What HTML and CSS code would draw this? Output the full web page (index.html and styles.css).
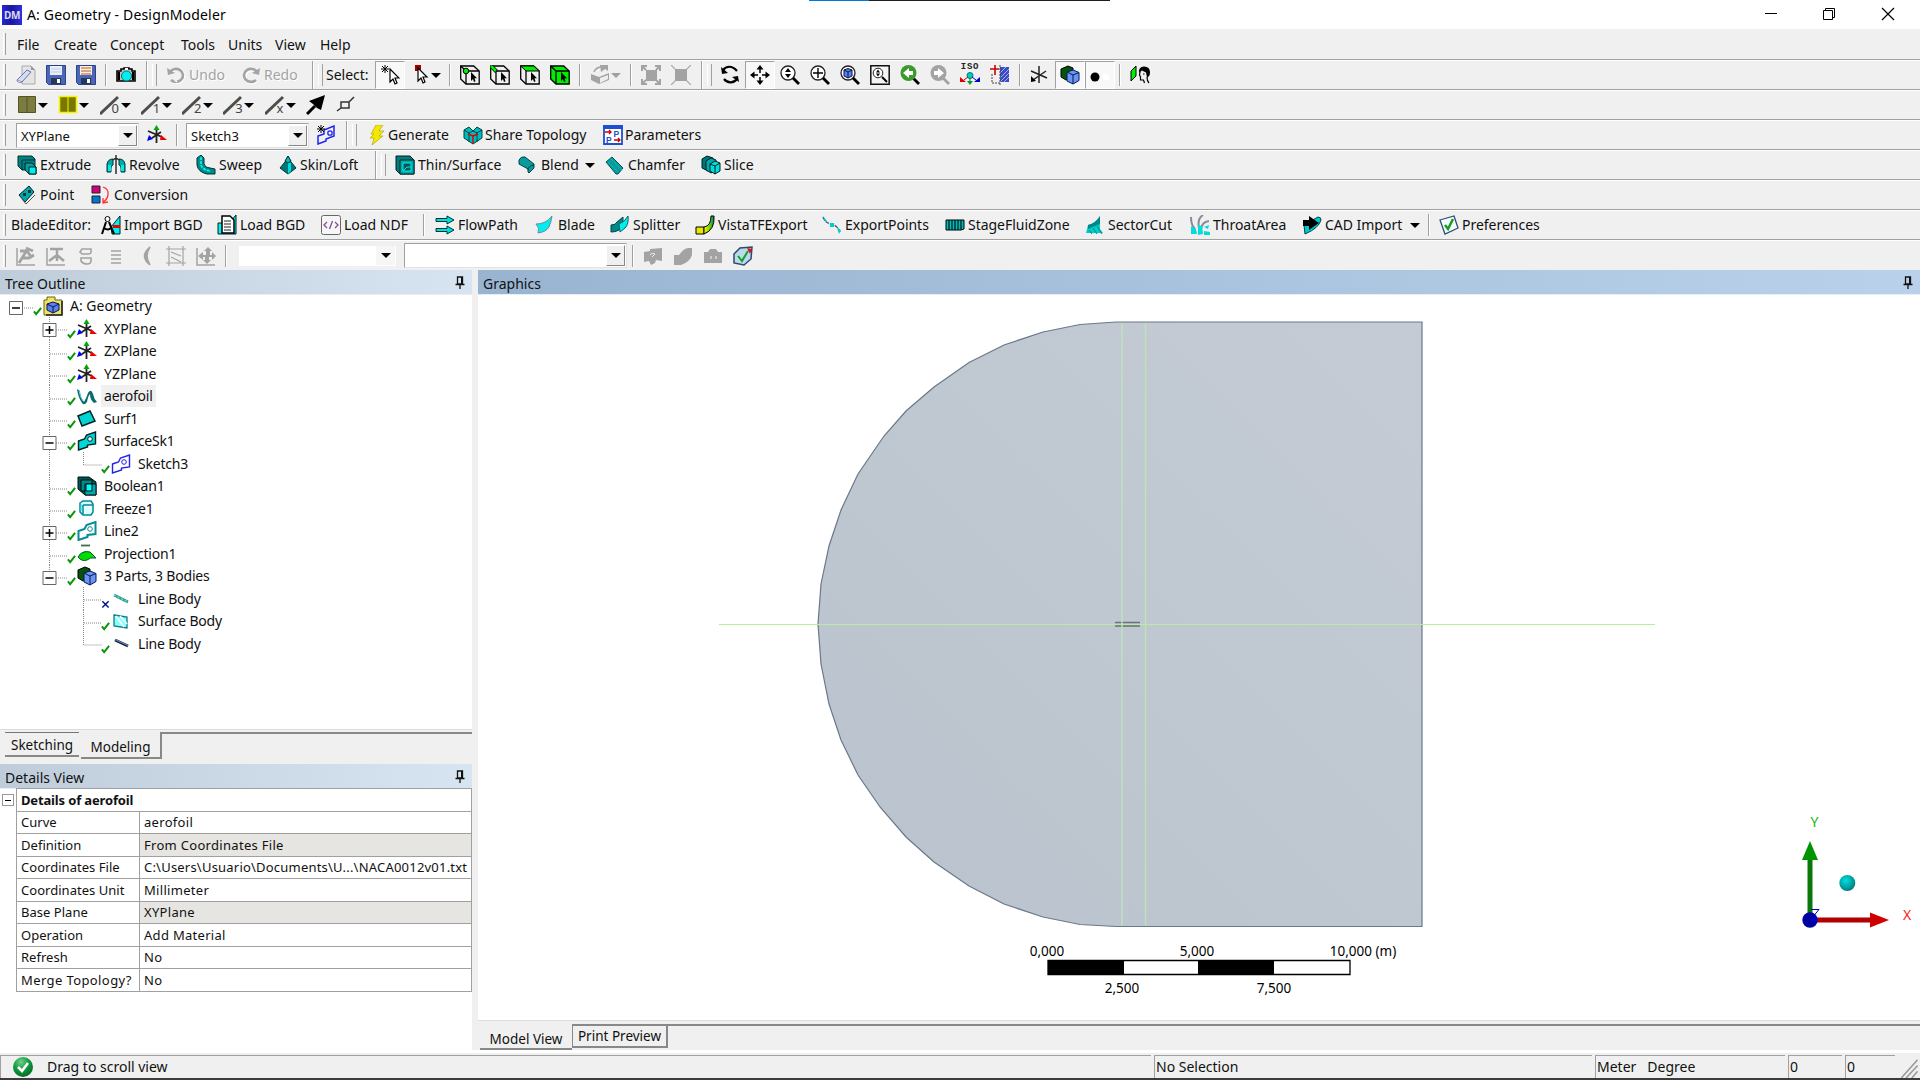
FILE: index.html
```html
<!DOCTYPE html>
<html lang="en">
<head>
<meta charset="utf-8">
<title>A: Geometry - DesignModeler</title>
<link rel="stylesheet" href="styles.css">
</head>
<body>
<svg class="defs" aria-hidden="true">
<defs>
<linearGradient id="face" x1="0" y1="1" x2="1" y2="0"><stop offset="0" stop-color="#bac3cd"/><stop offset="1" stop-color="#c4cbd5"/></linearGradient>
<radialGradient id="ballc" cx=".4" cy=".35" r=".7"><stop offset="0" stop-color="#00e0e0"/><stop offset="1" stop-color="#007878"/></radialGradient>
<radialGradient id="ballg" cx=".4" cy=".25" r=".8"><stop offset="0" stop-color="#6fd08c"/><stop offset=".5" stop-color="#109a3c"/><stop offset="1" stop-color="#04662a"/></radialGradient>
<linearGradient id="fan" x1="0" x2="1"><stop offset="0" stop-color="#ff0"/><stop offset=".6" stop-color="#6c0"/><stop offset="1" stop-color="#088"/></linearGradient>
</defs>
<symbol id="new" viewBox="0 0 20 20"><path d="M6 1h9l4 4v14H6z" fill="#e4e4e4" stroke="#aaa"/><path d="M15 1v4h4" fill="#999"/><path d="M1 15L11 5l4 2-9 10z" fill="#d6dcf4" stroke="#6a74a8"/><path d="M1 15q0 3 5 2" stroke="#6a74a8" fill="#fff"/></symbol>
<symbol id="save" viewBox="0 0 20 20"><path d="M.5.5h19v19h-17l-2-2z" fill="#4a66b4" stroke="#2c438c"/><path d="M4 1h12v9H4z" fill="#e9eefa"/><path d="M5 4h10M5 7h10" stroke="#c3cbe0"/><path d="M5 13h10v6H5z" fill="#24365e"/><path d="M11 14h3v4h-3z" fill="#fff"/></symbol>
<symbol id="saveas" viewBox="0 0 20 20"><path d="M.5.5h19v19h-17l-2-2z" fill="#4a66b4" stroke="#2c438c"/><path d="M4 1h12v9H4z" fill="#fff0d8"/><path d="M5 3h10M5 6h10M5 9h10" stroke="#b0573c"/><path d="M5 13h10v6H5z" fill="#24365e"/><path d="M11 14h3v4h-3z" fill="#fff"/></symbol>
<symbol id="camera" viewBox="0 0 20 20"><path d="M1 6h4V4h3V3h5v1h3v2h3v10H1z" fill="#c0c0c0" stroke="#000" stroke-width="1.6"/><path d="M3 7v8M17 7v8" stroke="#000" stroke-width="2"/><circle cx="10.500" cy="11" r="5" fill="#0ee" stroke="#077"/><path d="M9 3h3v2H9z" fill="#fff"/></symbol>
<symbol id="undo" viewBox="0 0 20 20"><path d="M3 8a7 7 0 1 1 2 7" fill="none" stroke="#fff" stroke-width="3" transform="translate(1 1)"/><path d="M4 7a7 6.500 0 1 1 1 8" fill="none" stroke="#a3a3a3" stroke-width="2.600"/><path d="M1 3l1 7 7-2z" fill="#a3a3a3"/><path d="M9 15l2 2" stroke="#f0f0f0" stroke-width="2"/></symbol>
<symbol id="redo" viewBox="0 0 20 20"><path d="M16 7A7 6.500 0 1 0 15 15" fill="none" stroke="#fff" stroke-width="2.600" transform="translate(1 1)"/><path d="M16 7A7 6.500 0 1 0 15 15" fill="none" stroke="#a3a3a3" stroke-width="2.600"/><path d="M19 3l-1 7-7-2z" fill="#a3a3a3"/></symbol>
<symbol id="cur" viewBox="0 0 20 20"><path d="M10 4v13l3-3 2 5 2-1-2-5h4z" fill="#fff" stroke="#000" stroke-width="1.200"/><path d="M5 0v8M1 4h8M2 1l6 6M8 1L2 7" stroke="#000"/></symbol>
<symbol id="pick" viewBox="0 0 20 20"><path d="M5 0h6v6H5z" fill="#a00000"/><path d="M8 3v13l3-3 2 5 2-1-2-5h4z" fill="#fff" stroke="#000" stroke-width="1.200"/></symbol>
<symbol id="cubep" viewBox="0 0 20 20"><path d="M.7 1h13l5.500 5v13H6l-5.300-5z" fill="#f0f0f0" stroke="#000" stroke-width="1.300"/><path d="M.7 1L6 6h13M6 6v13" fill="none" stroke="#000" stroke-width="1.300"/><circle cx="6" cy="6" r="2.800" fill="#0e0" stroke="#000"/><path d="M11 7v9l2-2 1 3 1.500-.7-1-3H17z"/></symbol>
<symbol id="cubee" viewBox="0 0 20 20"><path d="M.7 1h13l5.500 5v13H6l-5.300-5z" fill="#f0f0f0" stroke="#000" stroke-width="1.300"/><path d="M6 6h13M6 6v13" fill="none" stroke="#000" stroke-width="1.300"/><path d="M1 1l5.500 5.500" stroke="#000" stroke-width="4"/><path d="M1 1l5 5" stroke="#0e0" stroke-width="2.600"/><path d="M11 7v9l2-2 1 3 1.500-.7-1-3H17z"/></symbol>
<symbol id="cubef" viewBox="0 0 20 20"><path d="M.7 1h13l5.500 5v13H6l-5.300-5z" fill="#f0f0f0" stroke="#000" stroke-width="1.300"/><path d="M.7 1h13l5.500 5H6z" fill="#0e0" stroke="#000"/><path d="M6 6v13" stroke="#000" stroke-width="1.300"/><path d="M11 7v9l2-2 1 3 1.500-.7-1-3H17z"/></symbol>
<symbol id="cubeb" viewBox="0 0 20 20"><path d="M.7 1h13l5.500 5v13H6l-5.300-5z" fill="#0e0" stroke="#000" stroke-width="1.300"/><path d="M.7 1L6 6h13M6 6v13" fill="none" stroke="#000" stroke-width="1.300"/><path d="M11 7v9l2-2 1 3 1.500-.7-1-3H17z"/></symbol>
<symbol id="ext" viewBox="0 0 20 20"><path d="M1 9l8 3v7l-8-4zM9 12l10-4v7L9 19z" fill="#a3a3a3"/><path d="M10 13l8-3v4l-8 4z" fill="#eee"/><path d="M4 7q2-5 8-5" fill="none" stroke="#a3a3a3" stroke-width="1.500"/><path d="M10 0h8v6l-3-2-4 3z" fill="#a3a3a3"/></symbol>
<symbol id="gr1" viewBox="0 0 20 20"><path d="M5 5h11v11H5z" fill="#a3a3a3"/><path d="M1 6V1h5M14 1h5v5M19 14v5h-5M6 19H1v-5M1 1l4 4M19 1l-4 4M1 19l4-4M19 19l-4-4" fill="none" stroke="#a3a3a3" stroke-width="2"/></symbol>
<symbol id="gr2" viewBox="0 0 20 20"><path d="M4 4h12v12H4z" fill="#a3a3a3"/><path d="M0 0l20 20M20 0L0 20" stroke="#a3a3a3" stroke-width="1.200"/></symbol>
<symbol id="rot" viewBox="0 0 20 20"><path d="M3 5c3-4 9-5 14 1M17 14c-3 4-9 5-13 0" fill="none" stroke="#000" stroke-width="2.200"/><path d="M1 2l1 7 6-1zM19 17l-1-6-6 1z"/></symbol>
<symbol id="pan" viewBox="0 0 20 20"><path d="M10 4v4M10 12v4M4 10h4M12 10h4" stroke="#000" stroke-width="1.500"/><path d="M10 0l3.500 4.500h-7zM10 20l3.500-4.500h-7zM0 10l4.500-3.500v7zM20 10l-4.500-3.500v7z"/></symbol>
<symbol id="mag" viewBox="0 0 20 20"><circle cx="8" cy="8" r="7" fill="#fff" stroke="#222" stroke-width="1.300"/><path d="M13 13l6 6" stroke="#000" stroke-width="2.800"/></symbol>
<symbol id="z1" viewBox="0 0 20 20"><use href="#mag"/><path d="M8 3l3 4H5zM8 13l3-4H5z"/></symbol>
<symbol id="z2" viewBox="0 0 20 20"><use href="#mag"/><path d="M8 3v10M3 8h10" stroke="#000" stroke-width="1.400"/></symbol>
<symbol id="z3" viewBox="0 0 20 20"><use href="#mag"/><path d="M4 5l4-1.500L12 5v6l-4 2-4-2z" fill="#5584f0" stroke="#114" /><path d="M4 5l4 2 4-2M8 7v6" stroke="#114" fill="none"/></symbol>
<symbol id="z4" viewBox="0 0 20 20"><path d="M.8.800h18.400v18.400H.8z" fill="#f4f4f4" stroke="#111" stroke-width="1.500"/><circle cx="8" cy="8" r="4.800" fill="#fff" stroke="#222"/><path d="M12 12l5 5" stroke="#000" stroke-width="2"/><path d="M8 4.500l2 3H6zM8 11.500l2-3H6z"/></symbol>
<symbol id="z5" viewBox="0 0 20 20"><path d="M13 13l6 6" stroke="#000" stroke-width="2.800"/><circle cx="8.500" cy="8" r="8" fill="#3c9a2c"/><path d="M3 8l6-5v3h4v4H9v3z" fill="#fff"/></symbol>
<symbol id="z6" viewBox="0 0 20 20"><path d="M13 13l6 6" stroke="#a3a3a3" stroke-width="2.800"/><circle cx="8.500" cy="8" r="8" fill="#a3a3a3"/><path d="M14 8L8 3v3H4v4h4v3z" fill="#fff"/></symbol>
<symbol id="iso" viewBox="0 0 20 20"><circle cx="10" cy="10.500" r="3" fill="#0cc" stroke="#077"/><path d="M10 13v4" stroke="#080"/><path d="M7 16h6l-3 4z" fill="#093"/><path d="M8 12l-4 3" stroke="#c00"/><path d="M0 12v5h6z" fill="#d00"/><path d="M12 12l4 3" stroke="#00c"/><path d="M20 12v5h-6z" fill="#00d"/></symbol>
<symbol id="sec" viewBox="0 0 20 20"><path d="M10 2h9v15h-9z" fill="#3a4cc0"/><path d="M10 8l6-6M10 13l9-9M10 17l9-9M14 17l5-5" stroke="#9fb0ff"/><path d="M10 0v20M2 9v9h8" stroke="#444" fill="none" stroke-dasharray="2 1"/><path d="M5 0v10M0 4h9" stroke="#c00" stroke-width="1.600"/></symbol>
<symbol id="axk" viewBox="0 0 20 20"><path d="M9 1v17M1 6l16 7M16 6L3 15" stroke="#222" stroke-width="1.500"/><path d="M1 17v-6l5 5z"/></symbol>
<symbol id="parts" viewBox="0 0 20 20"><path d="M1 4l7-3 5 2v9l-7 3-5-3z" fill="#06530b" stroke="#000"/><path d="M7 7l6-2 6 2.500v8L13 19l-6-3z" fill="#6d93f4" stroke="#001a55"/><path d="M7 7l6 3 6-2.500M13 10v9" fill="none" stroke="#001a55"/></symbol>
<symbol id="dot" viewBox="0 0 20 20"><circle cx="5" cy="12" r="4.500"/><circle cx="16" cy="12" r="3.500" fill="#fff"/></symbol>
<symbol id="facei" viewBox="0 0 20 20"><path d="M1 6l5-5v10l-5 5z" fill="#0e0" stroke="#000"/><path d="M9 8q-1-6 5-6.500 6 0 6 6 0 4-3 5l-1-5-4-2z"/><path d="M10 7l-.5 3 1 2v3h3l1 3M17 12q0 4 2 6M13 9h1.500" stroke="#000" fill="none" stroke-width="1.200"/></symbol>
<symbol id="sq1" viewBox="0 0 20 20"><path d="M1.500 1.500h17v16h-17z" fill="#7b7b44" stroke="#55551c"/><path d="M10 1v17" stroke="#55551c"/></symbol>
<symbol id="sq2" viewBox="0 0 20 20"><path d="M1.500 1.500h17v16h-17z" fill="#787800" stroke="#f4f400" stroke-width="1.600"/><path d="M10 1v17" stroke="#f4f400"/></symbol>
<symbol id="ln" viewBox="0 0 20 20"><path d="M0 19L9 10.500L18 2" stroke="#4d4d4d" stroke-width="3"/></symbol>
<symbol id="arr" viewBox="0 0 20 20"><path d="M1 19L9 11" stroke="#000" stroke-width="3"/><path d="M19 0l-4 15-4-2-4-4-4-3z"/></symbol>
<symbol id="box" viewBox="0 0 20 20"><path d="M5 7h8v6H5zM13 7l5-5M5 13l-4 3" fill="none" stroke="#333" stroke-width="1.500"/></symbol>
<symbol id="plane" viewBox="0 0 20 20"><path d="M9.500 4v14M1 6l14 6M14 7L5 13" stroke="#222" stroke-width="1.800"/><path d="M9.500 0L6.500 5h6z" fill="#0a0"/><path d="M0 16l2-6 4 4z" fill="#00e"/><path d="M20 15l-6-5-1 5z" fill="#e00"/></symbol>
<symbol id="skn" viewBox="0 0 20 20"><path d="M2 11l6-2V5l10-4v10l-8 3v2l-8 3z" fill="none" stroke="#22e" stroke-width="1.500"/><circle cx="14" cy="8" r="2.200" fill="none" stroke="#22e" stroke-width="1.300"/><path d="M5 0v8M1 4h8M2 1l6 6M8 1L2 7" stroke="#000"/></symbol>
<symbol id="bolt" viewBox="0 0 20 20"><path d="M10 0h7l-4 6h5l-5 5h4L6 20l2-7H4l4-4H5z" fill="#f4e800" stroke="#a89c00" stroke-width=".6"/></symbol>
<symbol id="share" viewBox="0 0 20 20"><path d="M1 5l5-3 4 4 4-4 5 3v8l-9 6-9-6z" fill="#0bb" stroke="#044"/><path d="M1 5l5 3 4-2 4 2 5-3M6 8v9M14 8v9" stroke="#044" fill="none"/><path d="M5 9l5 2 5-2M10 11v8" stroke="#d00" fill="none" stroke-width="1.400"/></symbol>
<symbol id="param" viewBox="0 0 20 20"><path d="M1 1h18v18H1z" fill="#fff" stroke="#1d4fd0" stroke-width="1.800"/><path d="M0 0h20v4H0z" fill="#1d4fd0"/><path d="M2 7h6M6 5l2 2-2 2M11 15h6M15 13l2 2-2 2" stroke="#c00" fill="none" stroke-width="1.300"/></symbol>
<symbol id="extr" viewBox="0 0 20 20"><path d="M1 1h14l3 3v11H5l-4-4z" fill="#008080" stroke="#033"/><path d="M5 5h13M5 5v10" stroke="#033"/><path d="M8 8h7l4 4v7h-7l-4-4z" fill="#0b9d9d" stroke="#022"/><path d="M12 12h7v7h-7z" fill="#0ee" stroke="#022"/></symbol>
<symbol id="rev" viewBox="0 0 20 20"><path d="M1 9q1-5 6-5v6q-2 0-2 3v4H1zM19 9q-1-5-6-5v6q2 0 2 3v4h4z" fill="#0aa" stroke="#033"/><path d="M2 10h3v6H2zM15 10h3v6h-3z" fill="#0ee"/><path d="M10 0v19M7 5q3-3 6 0" stroke="#222" stroke-width="1.400" fill="none"/></symbol>
<symbol id="swp" viewBox="0 0 20 20"><path d="M1 3l4-3 3 3v6q1 4 6 4l5 1v5h-8Q2 17 1 10z" fill="#008a8a" stroke="#033"/><path d="M5 2v8q2 5 9 6" stroke="#0ee" stroke-width="1.800" fill="none" stroke-dasharray="3 1"/></symbol>
<symbol id="skin" viewBox="0 0 20 20"><path d="M11 1l3 6 5 6-8 6-8-6 5-6z" fill="#077" stroke="#033"/><path d="M11 7l3 1v8l-3 3z" fill="#0dd"/><path d="M8 6l3 2 3-2-3-5z" fill="#0bb" stroke="#033"/></symbol>
<symbol id="thin" viewBox="0 0 20 20"><path d="M1 1h14l4 4v14H5l-4-4z" fill="#007c7c" stroke="#022"/><path d="M5 5h14v14H5z" fill="#0aa" stroke="#022"/><path d="M8 8h8v8H8z" fill="#055" stroke="#0ee"/><path d="M8 16l4-4h4" stroke="#0ee" fill="none"/></symbol>
<symbol id="blend" viewBox="0 0 20 20"><path d="M1 5q2-4 6-3l9 7v4l-5 5-1-1v-3L1 9z" fill="#0a9c9c" stroke="#044"/><path d="M10 15q0-4 6-5" stroke="#033" fill="none"/></symbol>
<symbol id="cham" viewBox="0 0 20 20"><path d="M1 7l6-5 11 11-5 6h-2z" fill="#0a9c9c" stroke="#055"/><path d="M3 7l10 10M6 4l11 11" stroke="#0cc" stroke-dasharray="1 1"/></symbol>
<symbol id="slice" viewBox="0 0 20 20"><path d="M1 4l5-3 6 2v10l-5 3-6-3z" fill="#077" stroke="#022"/><path d="M5 6l5-3 5 2v10l-5 3-5-3z" fill="#0aa" stroke="#022"/><path d="M9 9l5-3 5 2v8l-5 3-5-3z" fill="#0dd" stroke="#022"/><path d="M9 9l5 2 5-3M14 11v8" stroke="#022" fill="none"/></symbol>
<symbol id="point" viewBox="0 0 20 20"><path d="M2 10l10-9 5 6-9 10z" fill="#0aa" stroke="#022"/><path d="M5 14l4 5 9-9" fill="none" stroke="#555"/><path d="M6 8h3v3H6zM11 5h3v3h-3z" fill="#033"/></symbol>
<symbol id="conv" viewBox="0 0 20 20"><path d="M1 1h8v7H1z" fill="#d2007e" stroke="#222"/><path d="M1 11h8v7H1z" fill="#0078d0" stroke="#222"/><path d="M12 2q6 2 5 8-1 5-5 7M12 13v5l5-1" fill="none" stroke="#f33" stroke-width="1.300"/></symbol>
<symbol id="imp" viewBox="0 0 20 20"><path d="M10 12l9-11v18h-8z" fill="#0ee" stroke="#022"/><path d="M12 10h7v3h-7z" fill="#e00"/><circle cx="6.500" cy="4" r="2.500" fill="#fff" stroke="#000"/><path d="M5 7L1 19M8 7l5 12M3 13q4 3 7 0" stroke="#000" stroke-width="2" fill="none"/></symbol>
<symbol id="lbgd" viewBox="0 0 20 20"><path d="M12 8l7-8v19H1V8z" fill="#0ee" stroke="#022"/><path d="M5 1h8l4 4v13H5z" fill="#fff" stroke="#000" stroke-width="1.500"/><path d="M7 6h7M7 9h7M7 12h7M7 15h7" stroke="#222"/></symbol>
<symbol id="ndf" viewBox="0 0 20 20"><rect x=".5" y=".5" width="19" height="19" rx="2" fill="#f6f6f6" stroke="#666"/><path d="M6 7l-3 3 3 3M14 7l3 3-3 3M11.500 6l-3 8" fill="none" stroke="#835096" stroke-width="1.300"/></symbol>
<symbol id="flow" viewBox="0 0 20 20"><path d="M1 3.500h11V1l7 4-7 4V6.500H1zM1 13.500h11V11l7 4-7 4v-2.500H1z" fill="#0dd" stroke="#033"/></symbol>
<symbol id="blade" viewBox="0 0 20 20"><path d="M1 9q5 0 9-2 4-2 7-6-1 7-3 11-3 5-11 6 2-5-2-9z" fill="#0ee" stroke="#678" stroke-width=".8"/></symbol>
<symbol id="split" viewBox="0 0 20 20"><path d="M1 10q5 0 6-3l6-5v9q-4 6-12 6z" fill="#088" stroke="#044"/><path d="M9 9q6-2 9-8 1 8-3 12l-5 4z" fill="#0ee" stroke="#066"/></symbol>
<symbol id="vista" viewBox="0 0 20 20"><path d="M1 12h8v7H1z" fill="#e8e800" stroke="#000"/><path d="M9 12q7-1 7-11h3q1 14-10 18z" fill="url(#fan)" stroke="#000"/></symbol>
<symbol id="expt" viewBox="0 0 20 20"><path d="M1 2q2 6 8 7 6 1 9 8" stroke="#456" stroke-width="1.300" fill="none" stroke-dasharray="4 1"/><path d="M1 1l2 6 2-1zM8 8h4v4H8zM15 13l4 2-2 4z" fill="#0cc"/></symbol>
<symbol id="stage" viewBox="0 0 20 20"><path d="M1 5h18v9l-3 1H1z" fill="#0bb" stroke="#000"/><path d="M4 5v10M7 5v10M10 5v10M13 5v10M16 5v10" stroke="#022" stroke-width="1.300"/></symbol>
<symbol id="sect" viewBox="0 0 20 20"><path d="M1 18l2-8q8-2 12-9v13l3 4z" fill="#0cc"/><path d="M3 10q8-2 12-9v8l-12 5z" fill="#088"/><path d="M4 15l3 4M8 13l4 6M12 11l5 8" stroke="#088"/></symbol>
<symbol id="thr" viewBox="0 0 20 20"><path d="M1 2q0 8 4 12M13 0Q7 4 9 13M19 6q-7 1-8 8" fill="none" stroke="#889" stroke-width="2"/><path d="M1 11l5 3 1 5H1zM8 10l4 1 1 8-5 1zM14 12l5-2-1 4zM14 16l6 1v3h-6z" fill="#0dd"/></symbol>
<symbol id="cad" viewBox="0 0 20 20"><path d="M2 10l14-8q3 0 3 3-2 8-16 14z" fill="#0cc" stroke="#044"/><path d="M1 5h6V1l10 7-10 7v-4H1z"/></symbol>
<symbol id="pref" viewBox="0 0 20 20"><path d="M1 5l14-4 4 12-13 6z" fill="#fafcff" stroke="#2d4d78" stroke-width="1.300"/><path d="M6 10l3 4 5-10" fill="none" stroke="#12a01c" stroke-width="2.500"/></symbol>
<symbol id="g1" viewBox="0 0 20 20"><path d="M1 2v17h18" fill="none" stroke="#a3a3a3" stroke-width="1.500"/><path d="M3 17L11 4M4 5h7l5 7M7 12h6l5-3M10 2l7 3" stroke="#a3a3a3" fill="none" stroke-width="2.800"/></symbol>
<symbol id="g2" viewBox="0 0 20 20"><path d="M1 2v17h18" fill="none" stroke="#a3a3a3" stroke-width="1.500"/><path d="M4 3h13M11 3v12M3 15l8-6 7 6" stroke="#a3a3a3" fill="none" stroke-width="2.500"/></symbol>
<symbol id="g3" viewBox="0 0 20 20"><path d="M6 3h9v3q0 2-3 2H6l-2-2zM5 12h10v3q0 3-4 3-4 0-6-3z" fill="none" stroke="#a3a3a3" stroke-width="1.600"/></symbol>
<symbol id="g4" viewBox="0 0 20 20"><path d="M5 5h10M5 9h10M5 13h10M5 17h10" stroke="#a3a3a3" stroke-width="1.300"/></symbol>
<symbol id="g5" viewBox="0 0 20 20"><path d="M14 1q-11 9 0 18-6-9 0-18z" stroke="#a3a3a3" stroke-width="1.600" fill="#a3a3a3"/></symbol>
<symbol id="g6" viewBox="0 0 20 20"><path d="M0 3h20M0 17h20M3 0v20M17 0v20M5 6l10 4M5 11l10 5" stroke="#a3a3a3" fill="none" stroke-width="1.200"/></symbol>
<symbol id="g7" viewBox="0 0 20 20"><path d="M1 2v17h18" fill="none" stroke="#a3a3a3" stroke-width="1.500"/><path d="M2 10l5-4v3h3V5H8l4-4 4 4h-2v4h2V6l4 4-4 4v-3h-3v3h2l-4 4-4-4h2v-3H7v3z" fill="#a3a3a3"/></symbol>
<symbol id="h1" viewBox="0 0 20 20"><path d="M1 6l6-1V3l12-1v13l-6-1-1 3-4 2-2-4-5 1z" fill="#a3a3a3"/><path d="M7 9q2-3 5-1l-3 3" stroke="#eee" fill="none"/></symbol>
<symbol id="h2" viewBox="0 0 20 20"><path d="M1 9h5q4-6 9-7h4v7q-2 7-11 10H1z" fill="#a3a3a3"/></symbol>
<symbol id="h3" viewBox="0 0 20 20"><path d="M1 6h4l2-3h6l2 3h4v11H1z" fill="#a3a3a3"/><path d="M7 10h2v3H7zM12 10h2v3h-2z" fill="#ccc"/></symbol>
<symbol id="h4" viewBox="0 0 20 20"><path d="M1 8l6-6 12-1-1 12-7 6-10-2z" fill="#b8dcea" stroke="#347" stroke-width="1.500"/><path d="M14 2l5 1-2 5z" fill="#d11"/><path d="M5 10l4 5 6-10" fill="none" stroke="#1a9c2c" stroke-width="2"/></symbol>
<symbol id="geo" viewBox="0 0 20 20"><path d="M1 4h3V1h8v3h7v15H1z" fill="#ece46a" stroke="#6e6600"/><path d="M19 5v14H3" fill="none" stroke="#222" stroke-width="1.500"/><path d="M4 8l6-2 6 2v6l-6 3-6-3z" fill="#5584f0" stroke="#115"/><path d="M4 8l6 3 6-3M10 11v6" fill="none" stroke="#115"/></symbol>
<symbol id="foil" viewBox="0 0 20 20"><path d="M0 3l3 2q0 6 4 11 2-3 4-9 3-5 5 1 1 5 4 8l-3 1q-4-3-4-9-2 2-3 8-3 4-5 1-4-6-5-14z" fill="#0a6a72"/><path d="M2 5q2 8 4 10" stroke="#6cd" fill="none"/></symbol>
<symbol id="surf" viewBox="0 0 20 20"><path d="M1 7l12-5 5 10-13 5z" fill="#00d4d4" stroke="#022" stroke-width="1.500"/></symbol>
<symbol id="sk" viewBox="0 0 20 20"><path d="M1.500 10l6-2 2-4 9-3v12l-8 1v2l-9 3z" fill="#00d8d8" stroke="#022" stroke-width="1.400"/><circle cx="13" cy="8" r="2.300" fill="#fff" stroke="#022"/></symbol>
<symbol id="skb" viewBox="0 0 20 20"><path d="M1.500 10l6-2 2-4 9-3v12l-8 1v2l-9 3z" fill="none" stroke="#22e" stroke-width="1.400"/><circle cx="13" cy="8" r="2.300" fill="none" stroke="#22e"/></symbol>
<symbol id="skl" viewBox="0 0 20 20"><path d="M1.500 10l6-2 2-4 9-3v12l-8 1v2l-9 3z" fill="#fff" stroke="#078c94" stroke-width="2"/><circle cx="13" cy="8" r="2.300" fill="none" stroke="#078c94"/></symbol>
<symbol id="bool" viewBox="0 0 20 20"><path d="M1 1h11l7 5v13H8l-7-6z" fill="#055" stroke="#011"/><path d="M4 4h11v11H4z" fill="#088" stroke="#011"/><path d="M8 8h11v11H8z" fill="#0aa" stroke="#011"/><path d="M9 8h6v7H9z" fill="#0ff" stroke="#011"/></symbol>
<symbol id="frz" viewBox="0 0 20 20"><path d="M3 4l3-2h8l2 3v8l-2 3H6l-3-3z" fill="#dff" stroke="#089" stroke-width="1.500"/><path d="M6 6h10M6 6v9" stroke="#089" stroke-width="1.500"/><path d="M4 5v7" stroke="#0dd"/></symbol>
<symbol id="proj" viewBox="0 0 20 20"><path d="M4 1.500h9" stroke="#476b47" stroke-width="1.800"/><path d="M1 13q4-7 12-5l6 6q-6-1-9 2-5 2-9-3z" fill="#0d0" stroke="#053"/></symbol>
<symbol id="lb1" viewBox="0 0 20 20"><path d="M3 6l14 7" stroke="#2a9a8a" stroke-width="2.800"/><path d="M3 6l14 7" stroke="#8ff" stroke-dasharray="2 2"/></symbol>
<symbol id="sb" viewBox="0 0 20 20"><path d="M3 4l13 2v11L3 15z" fill="#8ff" stroke="#0a7d84" stroke-width="1.300"/><path d="M5 5l8 11M9 5l7 8" stroke="#fff" stroke-width="1.500"/></symbol>
<symbol id="lb2" viewBox="0 0 20 20"><path d="M4 6l13 6" stroke="#123" stroke-width="3"/><path d="M4 5.500l13 6" stroke="#68b" stroke-width="1.200"/></symbol>
<symbol id="ok" viewBox="0 0 10 10"><path d="M1 5.500l2.500 3L9 1.500" fill="none" stroke="#0a960a" stroke-width="2.200"/></symbol>
<symbol id="no" viewBox="0 0 10 10"><path d="M1.500 2l7 7M8.500 2l-7 7" fill="none" stroke="#00128a" stroke-width="1.600"/></symbol>
<symbol id="pin" viewBox="0 0 10 14"><path d="M2.500 1h5v7h-5zM.5 8.500h9M5 8.500V13" fill="none" stroke="#111" stroke-width="1.300"/><path d="M6.500 1v7" stroke="#111"/></symbol>
<symbol id="t-root" viewBox="0 0 34 23"><path d="M9.500 6.500h13v13h-13z" fill="#fff" stroke="#666"/><path d="M12 13h8" stroke="#000" stroke-width="1.500"/><path d="M24 13h10" stroke="#888" stroke-dasharray="1 1"/></symbol>
<symbol id="t-leaf" viewBox="0 0 68 23"><path d="M49.500 0v23M50 14h18" fill="none" stroke="#888" stroke-dasharray="1 1"/></symbol>
<symbol id="t-plus" viewBox="0 0 68 23"><path d="M49.500 0v23M50 13h18" fill="none" stroke="#888" stroke-dasharray="1 1"/><path d="M43 6.500h13v13h-13z" fill="#fff" stroke="#666"/><path d="M45.500 13h8M49.500 9v8" stroke="#000" stroke-width="1.500"/></symbol>
<symbol id="t-minus" viewBox="0 0 68 23"><path d="M49.500 0v23M50 13h18" fill="none" stroke="#888" stroke-dasharray="1 1"/><path d="M43 6.500h13v13h-13z" fill="#fff" stroke="#666"/><path d="M45.500 13h8" stroke="#000" stroke-width="1.500"/></symbol>
<symbol id="t-last" viewBox="0 0 68 23"><path d="M49.500 0v7M50 13h18" fill="none" stroke="#888" stroke-dasharray="1 1"/><path d="M43 6.500h13v13h-13z" fill="#fff" stroke="#666"/><path d="M45.500 13h8" stroke="#000" stroke-width="1.500"/></symbol>
<symbol id="t-sub" viewBox="0 0 102 23"><path d="M49.500 0v23M83.500 0v13h18" fill="none" stroke="#888" stroke-dasharray="1 1"/></symbol>
<symbol id="t-body" viewBox="0 0 102 23"><path d="M83.500 0v23M84 13h18" fill="none" stroke="#888" stroke-dasharray="1 1"/></symbol>
<symbol id="t-end" viewBox="0 0 102 23"><path d="M83.500 0v13h18" fill="none" stroke="#888" stroke-dasharray="1 1"/></symbol>
</svg>

<div class="app">
<header class="titlebar">
  <span class="logo">DM</span><span class="title">A: Geometry - DesignModeler</span>
  <svg class="winbtns" viewBox="0 0 140 29"><path d="M5 13.500h12M63.500 10.500h9v9h-9zM65.500 10.500v-2h9v9h-2" fill="none" stroke="#000"/><path d="M122 8l12 12M134 8l-12 12" stroke="#000" stroke-width="1.200"/></svg>
</header>
<div class="notch"><i></i></div>

<nav class="row menu"><i class="grip"></i><span>File</span><span>Create</span><span>Concept</span><span>Tools</span><span>Units</span><span>View</span><span>Help</span></nav>

<div class="row">
  <i class="grip"></i>
  <b class="ib"><svg><use href="#new"/></svg></b><b class="ib"><svg><use href="#save"/></svg></b><b class="ib"><svg><use href="#saveas"/></svg></b><i class="sep"></i><b class="ib"><svg><use href="#camera"/></svg></b>
  <i class="bandend gap wide"></i>
  <span class="tx off undo"><svg><use href="#undo"/></svg>Undo</span><span class="tx off redo"><svg><use href="#redo"/></svg>Redo</span>
  <i class="bandend"></i><span class="lbl">Select:</span>
  <b class="ib on"><svg><use href="#cur"/></svg></b><b class="ib drop first"><svg><use href="#pick"/></svg><i class="ar"></i></b><i class="sep"></i>
  <b class="ib"><svg><use href="#cubep"/></svg></b><b class="ib"><svg><use href="#cubee"/></svg></b><b class="ib"><svg><use href="#cubef"/></svg></b><b class="ib"><svg><use href="#cubeb"/></svg></b><i class="sep"></i>
  <b class="ib drop ext off"><svg><use href="#ext"/></svg><i class="ar"></i></b><i class="sep"></i>
  <b class="ib"><svg><use href="#gr1"/></svg></b><b class="ib"><svg><use href="#gr2"/></svg></b>
  <i class="bandend gap"></i>
  <b class="ib"><svg><use href="#rot"/></svg></b><b class="ib on"><svg><use href="#pan"/></svg></b><b class="ib"><svg><use href="#z1"/></svg></b><b class="ib"><svg><use href="#z2"/></svg></b><b class="ib"><svg><use href="#z3"/></svg></b><b class="ib"><svg><use href="#z4"/></svg></b><b class="ib"><svg><use href="#z5"/></svg></b><b class="ib"><svg><use href="#z6"/></svg></b><b class="ib isob"><svg><use href="#iso"/></svg><em>ISO</em></b><b class="ib"><svg><use href="#sec"/></svg></b><i class="sep"></i>
  <b class="ib"><svg><use href="#axk"/></svg></b><b class="ib on"><svg><use href="#parts"/></svg></b><b class="ib on"><svg><use href="#dot"/></svg></b><i class="sep"></i><b class="ib"><svg><use href="#facei"/></svg></b>
</div>

<div class="row lines">
  <i class="grip"></i>
  <b class="ib drop"><svg><use href="#sq1"/></svg><i class="ar"></i></b><b class="ib drop"><svg><use href="#sq2"/></svg><i class="ar"></i></b>
  <b class="ib drop"><svg><use href="#ln"/></svg><em>0</em><i class="ar"></i></b><b class="ib drop"><svg><use href="#ln"/></svg><em>1</em><i class="ar"></i></b><b class="ib drop"><svg><use href="#ln"/></svg><em>2</em><i class="ar"></i></b><b class="ib drop"><svg><use href="#ln"/></svg><em>3</em><i class="ar"></i></b><b class="ib drop"><svg><use href="#ln"/></svg><em>x</em><i class="ar"></i></b>
  <b class="ib"><svg><use href="#arr"/></svg></b><b class="ib"><svg><use href="#box"/></svg></b>
</div>

<div class="row sketchrow">
  <i class="grip"></i>
  <div class="combo">XYPlane<i class="cb"></i></div><b class="ib"><svg><use href="#plane"/></svg></b><i class="sep"></i>
  <div class="combo">Sketch3<i class="cb"></i></div><b class="ib"><svg><use href="#skn"/></svg></b>
  <i class="bandend gap"></i>
  <div class="gen"><span class="tx"><svg><use href="#bolt"/></svg>Generate</span><span class="tx"><svg><use href="#share"/></svg>Share Topology</span><span class="tx"><svg viewBox="0 0 20 20"><use href="#param"/><g class="pp"><text x="10.500" y="11.500">P</text><text x="3" y="18">P</text></g></svg>Parameters</span></div>
</div>

<div class="row feat">
  <i class="grip"></i><span class="tx"><svg><use href="#extr"/></svg>Extrude</span><span class="tx"><svg><use href="#rev"/></svg>Revolve</span><span class="tx"><svg><use href="#swp"/></svg>Sweep</span><span class="tx"><svg><use href="#skin"/></svg>Skin/Loft</span><i class="bandend"></i><span class="tx"><svg><use href="#thin"/></svg>Thin/Surface</span><span class="tx"><svg><use href="#blend"/></svg>Blend</span><i class="ar"></i><span class="tx"><svg><use href="#cham"/></svg>Chamfer</span><span class="tx"><svg><use href="#slice"/></svg>Slice</span>
</div>

<div class="row pts"><i class="grip"></i><span class="tx"><svg><use href="#point"/></svg>Point</span><span class="tx"><svg><use href="#conv"/></svg>Conversion</span></div>

<div class="row bladerow">
  <i class="grip"></i><span class="lbl">BladeEditor:</span><span class="tx"><svg><use href="#imp"/></svg>Import BGD</span><span class="tx"><svg><use href="#lbgd"/></svg>Load BGD</span><span class="tx"><svg><use href="#ndf"/></svg>Load NDF</span><i class="sep"></i><span class="tx"><svg><use href="#flow"/></svg>FlowPath</span><span class="tx"><svg><use href="#blade"/></svg>Blade</span><span class="tx"><svg><use href="#split"/></svg>Splitter</span><span class="tx"><svg><use href="#vista"/></svg>VistaTFExport</span><span class="tx"><svg><use href="#expt"/></svg>ExportPoints</span><span class="tx"><svg><use href="#stage"/></svg>StageFluidZone</span><span class="tx"><svg><use href="#sect"/></svg>SectorCut</span><span class="tx"><svg><use href="#thr"/></svg>ThroatArea</span><span class="tx"><svg><use href="#cad"/></svg>CAD Import</span><i class="ar"></i><i class="sep"></i><span class="tx"><svg><use href="#pref"/></svg>Preferences</span>
</div>

<div class="row last">
  <i class="grip"></i><b class="ib"><svg><use href="#g1"/></svg></b><b class="ib"><svg><use href="#g2"/></svg></b><b class="ib"><svg><use href="#g3"/></svg></b><b class="ib"><svg><use href="#g4"/></svg></b><b class="ib"><svg><use href="#g5"/></svg></b><b class="ib"><svg><use href="#g6"/></svg></b><b class="ib"><svg><use href="#g7"/></svg></b><i class="sep"></i>
  <div class="combo flat"><i class="cb"></i></div><div class="combo big"><i class="cb"></i></div><i class="sep"></i>
  <b class="ib"><svg><use href="#h1"/></svg></b><b class="ib"><svg><use href="#h2"/></svg></b><b class="ib"><svg><use href="#h3"/></svg></b><b class="ib"><svg><use href="#h4"/></svg></b>
</div>

<main class="main">
  <aside class="left">
    <h2 class="head">Tree Outline<svg><use href="#pin"/></svg></h2>
    <ul class="tree">
      <li class="l0"><svg class="br"><use href="#t-root"/></svg><svg class="ck"><use href="#ok"/></svg><svg class="ic"><use href="#geo"/></svg><span>A: Geometry</span></li>
      <li><svg class="br"><use href="#t-plus"/></svg><svg class="ck"><use href="#ok"/></svg><svg class="ic"><use href="#plane"/></svg><span>XYPlane</span></li>
      <li><svg class="br"><use href="#t-leaf"/></svg><svg class="ck"><use href="#ok"/></svg><svg class="ic"><use href="#plane"/></svg><span>ZXPlane</span></li>
      <li><svg class="br"><use href="#t-leaf"/></svg><svg class="ck"><use href="#ok"/></svg><svg class="ic"><use href="#plane"/></svg><span>YZPlane</span></li>
      <li class="sel"><svg class="br"><use href="#t-leaf"/></svg><svg class="ck"><use href="#ok"/></svg><svg class="ic"><use href="#foil"/></svg><span>aerofoil</span></li>
      <li><svg class="br"><use href="#t-leaf"/></svg><svg class="ck"><use href="#ok"/></svg><svg class="ic"><use href="#surf"/></svg><span>Surf1</span></li>
      <li><svg class="br"><use href="#t-minus"/></svg><svg class="ck"><use href="#ok"/></svg><svg class="ic"><use href="#sk"/></svg><span>SurfaceSk1</span></li>
      <li class="l2"><svg class="br"><use href="#t-sub"/></svg><svg class="ck"><use href="#ok"/></svg><svg class="ic"><use href="#skb"/></svg><span>Sketch3</span></li>
      <li><svg class="br"><use href="#t-leaf"/></svg><svg class="ck"><use href="#ok"/></svg><svg class="ic"><use href="#bool"/></svg><span>Boolean1</span></li>
      <li><svg class="br"><use href="#t-leaf"/></svg><svg class="ck"><use href="#ok"/></svg><svg class="ic"><use href="#frz"/></svg><span>Freeze1</span></li>
      <li><svg class="br"><use href="#t-plus"/></svg><svg class="ck"><use href="#ok"/></svg><svg class="ic"><use href="#skl"/></svg><span>Line2</span></li>
      <li><svg class="br"><use href="#t-leaf"/></svg><svg class="ck"><use href="#ok"/></svg><svg class="ic"><use href="#proj"/></svg><span>Projection1</span></li>
      <li><svg class="br"><use href="#t-last"/></svg><svg class="ck"><use href="#ok"/></svg><svg class="ic"><use href="#parts"/></svg><span>3 Parts, 3 Bodies</span></li>
      <li class="l2"><svg class="br"><use href="#t-body"/></svg><svg class="ck"><use href="#no"/></svg><svg class="ic"><use href="#lb1"/></svg><span>Line Body</span></li>
      <li class="l2"><svg class="br"><use href="#t-body"/></svg><svg class="ck"><use href="#ok"/></svg><svg class="ic"><use href="#sb"/></svg><span>Surface Body</span></li>
      <li class="l2"><svg class="br"><use href="#t-end"/></svg><svg class="ck"><use href="#ok"/></svg><svg class="ic"><use href="#lb2"/></svg><span>Line Body</span></li>
    </ul>
    <div class="tabs"><span class="tab">Sketching</span><span class="tab cur">Modeling</span><i class="fill"></i></div>
    <h2 class="head">Details View<svg><use href="#pin"/></svg></h2>
    <div class="details">
      <i class="mini"></i>
      <table>
        <colgroup><col class="name"><col></colgroup>
        <tr><th colspan="2">Details of aerofoil</th></tr>
        <tr><td>Curve</td><td>aerofoil</td></tr>
        <tr><td>Definition</td><td class="ro">From Coordinates File</td></tr>
        <tr><td>Coordinates File</td><td class="path">C:\Users\Usuario\Documents\U...\NACA0012v01.txt</td></tr>
        <tr><td>Coordinates Unit</td><td>Millimeter</td></tr>
        <tr><td>Base Plane</td><td class="ro">XYPlane</td></tr>
        <tr><td>Operation</td><td>Add Material</td></tr>
        <tr><td>Refresh</td><td>No</td></tr>
        <tr><td class="loose">Merge Topology?</td><td>No</td></tr>
      </table>
    </div>
  </aside>
  <section class="right">
    <h2 class="head blue">Graphics<svg><use href="#pin"/></svg></h2>
    <svg class="view" viewBox="478 295 1442 725">
      <path d="M1422 322H1116L1080 324.500 1043 332 1004 345 969 362.500 934 387 906 411 884 436 858 474 841 510 829 546 821 584 818 624 821 664 829 704 841 740 858 775 880 807 906 837 934 862 969 886 1004 904 1043 917 1080 924.500 1116 926.500H1422z" fill="url(#face)" stroke="#6a7889" stroke-width="1.200"/>
      <path d="M1115 622.500h25M1115 626h25" stroke="#66757a" stroke-width="1.600"/>
      <path d="M1122 323v603M1145.500 323v603" stroke="#bfe3b8" stroke-width="1.400"/>
      <path d="M719 624.500h936" stroke="#b9eba0" stroke-width="1.200"/>
      <path d="M1048 960.500h302v14h-302z" fill="#fff" stroke="#000" stroke-width="1.300"/>
      <path d="M1048 960h76v15h-76zM1198 960h76v15h-76z"/>
      <g class="scale"><text x="1047" y="956">0,000</text><text x="1197" y="956">5,000</text><text x="1363" y="956">10,000 (m)</text><text x="1122" y="993">2,500</text><text x="1274" y="993">7,500</text></g>
      <path d="M1807.500 858h5v58h-5z" fill="#087808"/><path d="M1810 841l-8 19h16z" fill="#009400"/>
      <path d="M1812 917.500h60v5h-60z" fill="#b00000"/><path d="M1889 920l-19-7.500v15z" fill="#d00000"/>
      <circle cx="1810" cy="920" r="7.700" fill="#0000a0"/><path d="M1811 909.500h8l-5 6" stroke="#0000c8" fill="none"/><path d="M1810 920l7-3v5z" fill="#00d"/>
      <circle cx="1847.300" cy="883" r="8" fill="url(#ballc)"/>
      <g class="axis"><text x="1814.500" y="827" fill="#18b818">Y</text><text x="1907" y="920" fill="#ff2020">X</text></g>
    </svg>
    <div class="tabs bottom"><span class="tab cur">Model View</span><span class="tab">Print Preview</span><i class="fill"></i></div>
  </section>
</main>
<footer class="status">
  <span class="s1"><svg viewBox="0 0 20 20"><circle cx="10" cy="10" r="10" fill="url(#ballg)"/><path d="M5 10l4 4 6-8" fill="none" stroke="#fff" stroke-width="2.600"/></svg>Drag to scroll view</span>
  <span>No Selection</span><span class="s3">Meter<em>Degree</em></span><span>0</span><span>0</span>
  <svg class="rs" viewBox="0 0 20 24"><path d="M3 24L20 5M8 24L20 11M14 24l6-7" stroke="#999" stroke-width="1.600"/></svg>
</footer>
<div class="taskbar"></div>
</div>
</body>
</html>
```
FILE: styles.css
```css
* { box-sizing: border-box; }
body { margin: 0; width: 1920px; height: 1080px; overflow: hidden; background: #f0f0f0; color: #111; font: 14px/20px "Noto Sans", "Open Sans", sans-serif; }
i, em, b { font-style: normal; font-weight: normal; }
.defs { position: absolute; width: 0; height: 0; }
.app { position: relative; display: flex; flex-direction: column; height: 1080px; }

.titlebar { display: flex; align-items: center; height: 29px; background: #fff; padding-left: 2px; color: #000; }
.logo { width: 20px; height: 20px; background: linear-gradient(90deg, #2626d8, #1818a0, #3030e0); color: #dde; font-size: 10px; font-weight: bold; text-align: center; letter-spacing: -.3px; }
.title { margin-left: 5px; flex: 1; letter-spacing: .17px; }
.winbtns { width: 140px; height: 29px; margin-right: 20px; }
.notch { position: absolute; left: 809px; top: 0; width: 301px; height: 1px; background: #1f1f1f; }
.notch i { display: block; width: 60px; height: 1px; background: #0078d7; }

.row { display: flex; align-items: center; height: 30px; border-top: 1px solid #fff; border-bottom: 1px solid #a0a0a0; white-space: nowrap; }
.row.last { border-bottom: 0; }
.row svg { width: 20px; height: 20px; flex: none; display: block; }
.menu { display: grid; height: 31px; border-top: 0; grid-template-columns: 17px 37px 56px 71px 47px 47px 45px 60px; }
.menu span { padding-top: 2px; }
.grip { width: 3px; height: 22px; margin: 0 5px 0 3px; border-left: 1px solid #fff; border-right: 1px solid #a0a0a0; flex: none; }
.ib { display: flex; align-items: center; justify-content: center; width: 30px; height: 28px; flex: none; }
.ib.on { background: #f8f8f8; border: 1px solid #fff; border-top-color: #a0a0a0; border-left-color: #a0a0a0; }
.ib.drop { width: 42px; gap: 1px; }
.ib.drop.first { width: 40px; }
.ib.drop.ext { width: 41px; }
.isob { position: relative; }
.isob em { position: absolute; left: 5px; top: 2px; width: 20px; text-align: center; font: bold 9px/9px "Liberation Mono", monospace; letter-spacing: .8px; color: #222; }
.sep { width: 10px; height: 22px; flex: none; background: linear-gradient(90deg, transparent 4px, #a0a0a0 4px, #a0a0a0 5px, #fff 5px, #fff 6px, transparent 6px); }
.bandend { position: relative; width: 14px; height: 28px; border-left: 1px solid #a0a0a0; box-shadow: inset 1px 0 #fff; flex: none; }
.bandend::after { content: ""; display: block; width: 3px; height: 22px; margin: 3px 0 0 5px; border-left: 1px solid #fff; border-right: 1px solid #a0a0a0; }
.bandend.gap { margin-left: 5px; }
.bandend.wide { margin-right: 7px; }
.ar { display: block; width: 0; height: 0; flex: none; border: 5px solid transparent; border-top-color: #000; border-bottom: 0; }
.off .ar { border-top-color: #a0a0a0; }
.tx { display: flex; align-items: center; gap: 3px; }
.row .tx svg { margin-left: -1px; }
.row .gen .tx svg { margin: 0 -1px 0 0; }
.tx.off { color: #a3a3a3; text-shadow: 1px 1px #fff; }
.undo { width: 75px; }
.redo { width: 70px; }
.row > .lbl { width: 49px; }
.lines .grip { margin-right: 6px; }
.lines .drop { position: relative; width: 41.25px; }
.lines em { position: absolute; left: 17px; top: 7px; font-size: 13px; color: #444; }
.combo { display: flex; align-items: center; width: 123px; height: 25px; margin-left: 5px; padding-left: 4px; background: #fff; border: 1px solid #a0a0a0; border-right-color: #e3e3e3; border-bottom-color: #e3e3e3; font-size: 13px; }
.cb { display: flex; align-items: center; justify-content: center; width: 19px; height: 21px; margin: 0 1px 0 auto; background: #f0f0f0; border: 1px solid #fff; border-right-color: #888; border-bottom-color: #888; }
.cb::after { content: ""; border: 5px solid transparent; border-top-color: #000; border-bottom: 0; }
.sketchrow .combo { margin-right: 3px; padding-top: 1px; }
.sketchrow .sep + .combo { margin: 0 2px 0 4px; }
.combo.flat { width: 157px; height: 20px; margin-left: 8px; border: 0; }
.combo.flat .cb { border: 0; height: 19px; margin: 0 1px 0 auto; background: #f6f6f6; }
.combo.big { width: 223px; margin: 0 1px 0 8px; }
.gen { display: grid; grid-template-columns: 97px 140px 120px; margin-left: 6px; }
.pp { font: bold 8.500px "Liberation Sans", sans-serif; fill: #1d4fd0; }
.feat { display: grid; grid-template-columns: 18px 89px 90px 81px 97px 21px 123px 66px 21px 96px 80px; }
.pts { display: grid; grid-template-columns: 18px 74px 120px; }
.bladerow { display: grid; grid-template-columns: 11px 91px 116px 104px 97px 17px 100px 75px 85px 127px 123px 140px 105px 112px 107px 14px 16px 120px; letter-spacing: -.02px; }

.main { display: flex; height: 780px; }
.left { width: 472px; display: flex; flex-direction: column; background: #fff; }
.head { display: flex; align-items: center; justify-content: space-between; height: 25px; margin: 0; padding: 3px 7px 0 5px; font-size: 14px; font-weight: normal; border-bottom: 1px solid #e6edf5; background: linear-gradient(90deg, #bfcddb, #d7e4f2); }
.head svg { width: 10px; height: 14px; margin-top: -2px; }
.head.blue { background: linear-gradient(90deg, #99b4d1, #b9d1ea); }
.tree { list-style: none; margin: 0; padding: 0; height: 434px; }
.tree li { display: flex; align-items: center; height: 22.5px; font-size: 14px; letter-spacing: -.2px; }
.tree .br { width: 68px; height: 23px; flex: none; }
.tree .l0 .br { width: 34px; }
.tree .l0, .tree li:nth-child(n+2):nth-child(-n+4) { letter-spacing: 0; }
.tree .l2 .br { width: 102px; }
.tree .ck { width: 9px; height: 10px; margin-top: 10px; margin-left: -1px; margin-right: 1px; flex: none; }
.tree .ic { width: 20px; height: 20px; margin-right: 4px; flex: none; }
.tree span { padding: 0 3px; height: 22px; line-height: 22px; }
.tree .sel span { background: #f0f0f0; }

.tabs { display: flex; align-items: flex-start; height: 35px; background: #f0f0f0; border-top: 1px solid #dcdcdc; padding: 2px 0 0 5px; }
.tab { border-top: 1px solid #777; border-bottom: 2px solid #888; height: 25px; line-height: 24px; width: 74px; text-align: center; font-size: 13.500px; }
.tab.cur { width: 81px; height: 27px; margin-left: 2px; line-height: 31px; border-top: 0; border-right: 2px solid #888; }
.fill { flex: 1; border-top: 2px solid #888; }
.details { display: flex; flex: 1; padding-left: 2px; }
.mini { width: 12px; height: 12px; margin: 5px 2px 0 0; border: 1px solid #999; background: linear-gradient(#000, #000) center / 6px 1px no-repeat #fff; }
table { width: 456px; height: 203px; margin-top: -1px; border-collapse: collapse; table-layout: fixed; font-size: 13px; letter-spacing: .03px; }
.name { width: 123px; }
th, td { height: 22.5px; padding: 0 0 0 4px; border: 1px solid #a0a0a0; text-align: left; line-height: 18px; white-space: nowrap; }
th { letter-spacing: -.15px; }
td + td { letter-spacing: .3px; }
.ro { background: #e6e5e1; }
td.path { letter-spacing: .21px; }
.loose { letter-spacing: .4px; }

.right { margin-left: 6px; width: 1442px; display: flex; flex-direction: column; }
.view { display: block; width: 1442px; height: 725px; background: #fff; }
.scale { font: 13.500px "Noto Sans", sans-serif; text-anchor: middle; }
.axis { font: 14px "Noto Sans", sans-serif; text-anchor: middle; }
.bottom { height: 30px; padding: 3px 0 0 2px; }
.bottom .tab { width: 96px; height: 24px; line-height: 21px; border: 2px solid #888; border-left-width: 1px; }
.bottom .cur { width: 92px; height: 26px; margin: 0; line-height: 30px; border: 0; border-bottom: 2px solid #888; }

.status { display: grid; grid-template-columns: 1154px 441px 193px 57px 53px 22px; height: 28px; padding-top: 5px; background: linear-gradient(#fff 3px, #f0f0f0 3px); }
.status span { display: flex; align-items: center; height: 23px; margin-right: 3px; padding: 0 0 0 1px; border-top: 1px solid #a0a0a0; border-left: 1px solid #a0a0a0; }
.status .s1 { padding-left: 12px; }
.s1 svg { width: 20px; height: 20px; margin-right: 14px; }
.s3 em { margin-left: 11px; }
.rs { width: 20px; height: 23px; }
.taskbar { height: 2px; background: #3c3c3e; }
```
